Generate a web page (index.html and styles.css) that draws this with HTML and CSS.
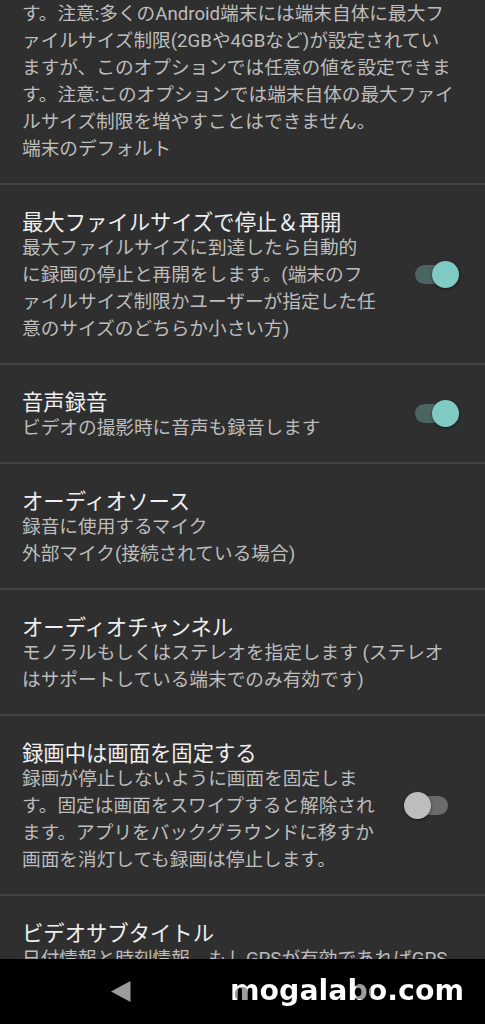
FILE: index.html
```html
<!DOCTYPE html>
<html lang="ja">
<head>
<meta charset="utf-8">
<title>設定</title>
<link rel="stylesheet" href="styles.css">
</head>
<body>
<div class="screen">
  <div class="list">
    <div class="pref first">
      <div class="text">
        <div class="summary">す。注意:多くのAndroid端末には端末自体に最大フ<br>ァイルサイズ制限(2GBや4GBなど)が設定されてい<br>ますが、このオプションでは任意の値を設定できま<br>す。注意:このオプションでは端末自体の最大ファイ<br>ルサイズ制限を増やすことはできません。<br>端末のデフォルト</div>
      </div>
    </div>
    <div class="pref">
      <div class="text">
        <div class="title">最大ファイルサイズで停止＆再開</div>
        <div class="summary">最大ファイルサイズに到達したら自動的<br>に録画の停止と再開をします。(端末のフ<br>ァイルサイズ制限かユーザーが指定した任<br>意のサイズのどちらか小さい方)</div>
      </div>
      <div class="switch on"></div>
    </div>
    <div class="pref">
      <div class="text">
        <div class="title">音声録音</div>
        <div class="summary">ビデオの撮影時に音声も録音します</div>
      </div>
      <div class="switch on"></div>
    </div>
    <div class="pref">
      <div class="text">
        <div class="title">オーディオソース</div>
        <div class="summary">録音に使用するマイク<br>外部マイク(接続されている場合)</div>
      </div>
    </div>
    <div class="pref">
      <div class="text">
        <div class="title">オーディオチャンネル</div>
        <div class="summary">モノラルもしくはステレオを指定します (ステレオ<br>はサポートしている端末でのみ有効です)</div>
      </div>
    </div>
    <div class="pref">
      <div class="text">
        <div class="title">録画中は画面を固定する</div>
        <div class="summary">録画が停止しないように画面を固定しま<br>す。固定は画面をスワイプすると解除され<br>ます。アプリをバックグラウンドに移すか<br>画面を消灯しても録画は停止します。</div>
      </div>
      <div class="switch off"></div>
    </div>
    <div class="pref">
      <div class="text">
        <div class="title">ビデオサブタイトル</div>
        <div class="summary">日付情報と時刻情報、もしGPSが有効であればGPS<br>情報を字幕として動画に記録します</div>
      </div>
    </div>
  </div>
  <div class="navbar">
    <div class="navbtn">
      <svg width="20" height="21" viewBox="0 0 20 21"><polygon points="19.5,0 19.5,21 0,10.5" fill="#9b9b9b"/></svg>
    </div>
    <div class="navbtn"></div>
    <div class="navbtn"></div>
    <span class="watermark">mogalabo.com</span>
  </div>
</div>
</body>
</html>
```
FILE: styles.css
```css
html, body {
  margin: 0;
  padding: 0;
  background: #2f2f2f;
}

.screen {
  width: 485px;
  height: 1024px;
  display: flex;
  flex-direction: column;
  overflow: hidden;
  font-family: Roboto, "Noto Sans CJK JP", sans-serif;
}

.list {
  flex: 1;
  min-height: 0;
  overflow: hidden;
  background: #2f2f2f;
}

.pref {
  display: flex;
  align-items: center;
  border-bottom: 2px solid #434343;
}

.pref .text {
  flex: 1;
  min-width: 0;
  padding: 25px 0 20px 22px;
}

.pref.first .text {
  padding-top: 1px;
}

.title {
  font-size: 21.33px;
  line-height: 25px;
  color: #efefef;
  white-space: nowrap;
}

.summary {
  font-size: 18.67px;
  line-height: 27px;
  color: #bdbdbd;
  white-space: nowrap;
}

.switch {
  position: relative;
  flex: none;
  width: 40px;
  height: 19px;
  border-radius: 10px;
}

.switch::after {
  content: "";
  position: absolute;
  top: -4px;
  width: 27px;
  height: 27px;
  border-radius: 50%;
  box-shadow: 0 1px 3px rgba(0, 0, 0, 0.55);
}

.switch.on {
  margin-right: 30px;
  background: #4c6562;
}

.switch.on::after {
  right: -4px;
  background: #7fcac2;
}

.switch.off {
  margin-right: 37px;
  background: #6b6b6b;
}

.switch.off::after {
  left: -4px;
  background: #bdbdbd;
}

.navbar {
  position: relative;
  height: 65px;
  flex: none;
  background: #000;
  display: flex;
  justify-content: center;
  align-items: center;
}

.navbtn {
  width: 122px;
  height: 40px;
  display: flex;
  align-items: center;
  justify-content: center;
}

.watermark {
  position: absolute;
  left: 230px;
  top: 15px;
  font-family: "DejaVu Sans", sans-serif;
  font-weight: bold;
  font-size: 28.4px;
  line-height: 34px;
  white-space: nowrap;
  color: transparent;
  background-color: #fff;
  background-image: radial-gradient(circle at 12px 20px, #9c9c9c 0 7px, transparent 7.5px), linear-gradient(#9c9c9c, #9c9c9c);
  background-repeat: no-repeat;
  background-size: 100% 100%, 15px 17px;
  background-position: 0 0, 126px 8px;
  -webkit-background-clip: text;
  background-clip: text;
}
```
